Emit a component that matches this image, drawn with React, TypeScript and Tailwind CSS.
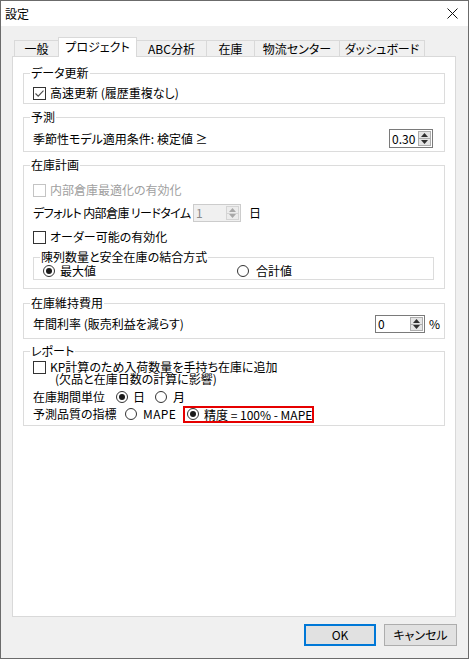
import React from 'react';

const Checkbox = ({ checked = false, disabled = false }: { checked?: boolean; disabled?: boolean }) => (
  <span
    className={`w-[13px] h-[13px] shrink-0 border bg-white flex items-center justify-center ${
      disabled ? 'border-[#c4c4c4]' : 'border-[#333333]'
    }`}
  >
    {checked && (
      <svg width="11" height="11" viewBox="0 0 11 11">
        <path d="M1.5 5.5 L4.2 8.2 L9.5 2.6" stroke="#4a4a4a" strokeWidth="1.1" fill="none" />
      </svg>
    )}
  </span>
);

const Radio = ({ checked = false }: { checked?: boolean }) => (
  <span className="w-[12px] h-[12px] shrink-0 rounded-full border border-[#333333] bg-white flex items-center justify-center">
    {checked && <span className="w-[6px] h-[6px] rounded-full bg-[#1a1a1a]" />}
  </span>
);

const Spin = ({
  value,
  className,
  disabled = false,
}: {
  value: string;
  className: string;
  disabled?: boolean;
}) => (
  <div
    className={`flex items-center border ${className} ${
      disabled ? 'border-[#cccccc] bg-[#f0f0f0] text-[#8a8a8a]' : 'border-[#7a7a7a] bg-white text-black'
    }`}
  >
    <span className="flex-1 pl-[2px] leading-[14px]">{value}</span>
    <div
      className={`w-[13px] h-[calc(100%-2px)] mr-[1px] border flex flex-col ${
        disabled ? 'border-[#d4d4d4] bg-[#ececec]' : 'border-[#adadad] bg-[#e5e5e5]'
      }`}
    >
      <div
        className={`flex-1 flex items-center justify-center border-b ${
          disabled ? 'border-[#d4d4d4]' : 'border-[#adadad]'
        }`}
      >
        <svg width="7" height="4" viewBox="0 0 7 4">
          <path d="M0 4 L3.5 0 L7 4 Z" fill={disabled ? '#a8a8a8' : '#303030'} />
        </svg>
      </div>
      <div className="flex-1 flex items-center justify-center">
        <svg width="7" height="4" viewBox="0 0 7 4">
          <path d="M0 0 L3.5 4 L7 0 Z" fill={disabled ? '#a8a8a8' : '#303030'} />
        </svg>
      </div>
    </div>
  </div>
);

const Group = ({
  label,
  className,
  children,
}: {
  label: string;
  className: string;
  children?: React.ReactNode;
}) => (
  <div className={`relative border border-[#dcdcdc] ${className}`}>
    <span className="absolute left-[6px] top-[-8px] bg-white px-[1px] leading-[14px] whitespace-nowrap">
      {label}
    </span>
    {children}
  </div>
);

const tabs = [
  { label: '一般', w: 'w-[45px]' },
  { label: 'プロジェクト', w: 'w-[79px]', active: true },
  { label: 'ABC分析', w: 'w-[71px]' },
  { label: '在庫', w: 'w-[49px]' },
  { label: '物流センター', w: 'w-[86px]' },
  { label: 'ダッシュボード', w: 'w-[86px]' },
];

export default function App() {
  return (
    <div className="w-[469px] h-[659px] overflow-hidden bg-[#f0f0f0] border border-[#6b6b6b] flex flex-col text-[12px] text-black font-['Noto_Sans_CJK_JP','Noto_Sans',sans-serif] [font-feature-settings:'palt']">
      {/* title bar */}
      <div className="h-[25px] shrink-0 bg-white flex items-center justify-between pl-[4px] pr-[10px]">
        <span className="leading-[16px]">設定</span>
        <svg width="11" height="11" viewBox="0 0 11 11">
          <path d="M0.5 0.5 L10.5 10.5 M10.5 0.5 L0.5 10.5" stroke="#111" strokeWidth="1" />
        </svg>
      </div>

      {/* tabs */}
      <div className="relative z-10 mt-[11px] ml-[13px] h-[19px] flex items-end">
        {tabs.map((t, i) => (
          <div
            key={t.label}
            className={`${t.w} ${i > 0 ? '-ml-px' : ''} border border-b-0 border-[#d9d9d9] flex items-center justify-center leading-[16px] whitespace-nowrap ${
              t.active ? 'relative h-[20px] -mb-px bg-white pb-[2px]' : 'h-[16px] bg-[#f0f0f0]'
            }`}
          >
            {t.label}
          </div>
        ))}
      </div>

      {/* panel */}
      <div className="ml-[11px] w-[444px] h-[561px] shrink-0 border border-[#d9d9d9] bg-white px-[10px] flex flex-col">
        <Group label="データ更新" className="mt-[16px] h-[31px]">
          <div className="mt-[11px] h-[16px] flex items-center pl-[9px]">
            <Checkbox checked />
            <span className="ml-[4px] leading-[16px]">高速更新 (履歴重複なし)</span>
          </div>
        </Group>

        <Group label="予測" className="mt-[13px] h-[35px]">
          <div className="mt-[11px] h-[19px] flex items-center pl-[9px] pr-[11px]">
            <span className="flex-1 leading-[16px]">季節性モデル適用条件: 検定値 ≥</span>
            <Spin value="0.30" className="w-[44px] h-[19px]" />
          </div>
        </Group>

        <Group label="在庫計画" className="mt-[13px] h-[124px]">
          <div className="mt-[16px] h-[16px] flex items-center pl-[9px]">
            <Checkbox disabled />
            <span className="ml-[4px] leading-[16px] text-[#a0a0a0]">内部倉庫最適化の有効化</span>
          </div>
          <div className="mt-[6px] h-[18px] flex items-center pl-[9px]">
            <span className="w-[160px] leading-[16px] whitespace-nowrap tracking-[-0.6px]">デフォルト 内部倉庫 リードタイム</span>
            <Spin value="1" disabled className="w-[48px] h-[18px]" />
            <span className="ml-[8px] leading-[16px]">日</span>
          </div>
          <div className="mt-[7px] h-[16px] flex items-center pl-[9px]">
            <Checkbox />
            <span className="ml-[4px] leading-[16px]">オーダー可能の有効化</span>
          </div>
          <Group label="陳列数量と安全在庫の結合方式" className="mt-[12px] ml-[9px] w-[401px] h-[23px]">
            <div className="mt-[6px] h-[14px] flex items-center pl-[9px]">
              <div className="w-[194px] flex items-center">
                <Radio checked />
                <span className="ml-[5px] leading-[14px]">最大値</span>
              </div>
              <div className="flex items-center">
                <Radio />
                <span className="ml-[7px] leading-[14px]">合計値</span>
              </div>
            </div>
          </Group>
        </Group>

        <Group label="在庫維持費用" className="mt-[14px] h-[36px]">
          <div className="mt-[11px] h-[18px] flex items-center pl-[9px]">
            <span className="flex-1 leading-[16px]">年間利率 (販売利益を減らす)</span>
            <Spin value="0" className="w-[50px] h-[18px]" />
            <span className="w-[19px] pl-[4px] leading-[16px]">%</span>
          </div>
        </Group>

        <Group label="レポート" className="mt-[12px] h-[75px]">
          <div className="mt-[9px] flex items-start pl-[9px]">
            <Checkbox />
            <div className="ml-[4px] flex flex-col leading-[12px]">
              <span>KP計算のため入荷数量を手持ち在庫に追加</span>
              <span className="pl-[5px]">(欠品と在庫日数の計算に影響)</span>
            </div>
          </div>
          <div className="mt-[4px] h-[16px] flex items-center pl-[9px]">
            <span className="w-[83px] leading-[16px] whitespace-nowrap">在庫期間単位</span>
            <div className="w-[39px] flex items-center">
              <Radio checked />
              <span className="ml-[5px] leading-[16px]">日</span>
            </div>
            <div className="flex items-center">
              <Radio />
              <span className="ml-[6px] leading-[16px]">月</span>
            </div>
          </div>
          <div className="mt-[1px] h-[16px] flex items-center pl-[9px]">
            <span className="w-[92px] leading-[16px] whitespace-nowrap">予測品質の指標</span>
            <div className="w-[58px] flex items-center">
              <Radio />
              <span className="ml-[6px] leading-[16px] tracking-[0.4px]">MAPE</span>
            </div>
            <div className="w-[131px] h-[17px] border-2 border-[#e60000] flex items-center pl-[2px]">
              <Radio checked />
              <span className="ml-[5px] leading-[13px] whitespace-nowrap">精度 = 100% - MAPE</span>
            </div>
          </div>
        </Group>
      </div>

      {/* buttons */}
      <div className="mt-[7px] flex justify-end gap-[8px] pr-[11px]">
        <button className="w-[72px] h-[22px] border-2 border-[#0078d7] bg-[#e1e1e1] flex items-center justify-center leading-[16px]">
          OK
        </button>
        <button className="w-[73px] h-[22px] border border-[#adadad] bg-[#e1e1e1] flex items-center justify-center leading-[16px]">
          キャンセル
        </button>
      </div>
    </div>
  );
}
